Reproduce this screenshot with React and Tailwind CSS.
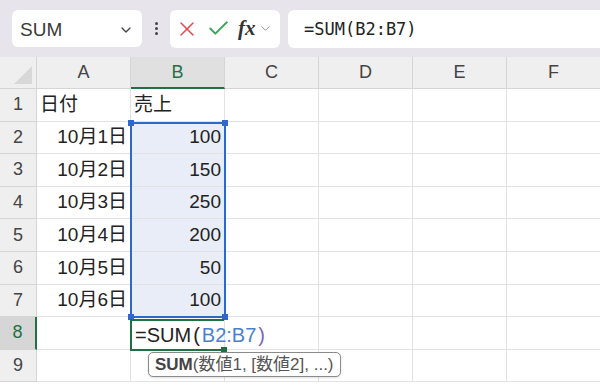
import { ChevronDown, X, Check } from 'lucide-react'

const cols = ['A', 'B', 'C', 'D', 'E', 'F']
const rows = [
  ['日付', '売上'],
  ['10月1日', '100'],
  ['10月2日', '150'],
  ['10月3日', '250'],
  ['10月4日', '200'],
  ['10月5日', '50'],
  ['10月6日', '100'],
  ['', ''],
  ['', ''],
]

const font = { fontFamily: '"Liberation Sans", "Noto Sans CJK JP", sans-serif' }

function Handle({ className }) {
  return <div className={`absolute w-[6px] h-[6px] ${className}`} />
}

function Cell({ r, c, value }) {
  const selected = c === 1 && r >= 1 && r <= 6
  const right = r >= 1 && r <= 6
  return (
    <div
      className={`relative w-[94px] h-full shrink-0 border-r border-b border-[#e2e2e2] px-[3px] flex items-center text-[19px] text-[#222] ${
        right ? 'justify-end' : 'justify-start'
      } ${selected ? 'bg-[#e8edf7]' : 'bg-white'}`}
    >
      {value}
    </div>
  )
}

export default function App() {
  return (
    <div className="w-[600px] h-[386px] overflow-hidden bg-white" style={font}>
      {/* formula bar */}
      <div className="h-[57px] bg-[#e7e5eb] flex items-center pl-3">
        <div className="w-[130px] h-[37px] bg-white rounded-md flex items-center justify-between pl-2 pr-2">
          <span className="text-[19px] text-[#3a3a3a] pt-[3px]">SUM</span>
          <ChevronDown className="w-4 h-4 text-[#444] mt-[2px]" strokeWidth={2} />
        </div>
        <div className="w-[28px] flex flex-col items-center gap-[2px]">
          <span className="w-[3px] h-[3px] rounded-full bg-[#444]" />
          <span className="w-[3px] h-[3px] rounded-full bg-[#444]" />
          <span className="w-[3px] h-[3px] rounded-full bg-[#444]" />
        </div>
        <div className="w-[110px] h-[38px] bg-white rounded-md flex items-center pl-[5px] gap-[7px]">
          <X className="w-[24px] h-[24px] text-[#e5484d]" strokeWidth={1.5} />
          <Check className="w-[25px] h-[25px] text-[#3aa55c]" strokeWidth={1.8} />
          <span className="flex items-center">
            <span
              className="text-[21px] italic font-bold text-[#333] leading-none"
              style={{ fontFamily: '"Liberation Serif", serif' }}
            >
              fx
            </span>
            <ChevronDown className="w-[15px] h-[15px] text-[#999] ml-[2px]" strokeWidth={1.6} />
          </span>
        </div>
        <div className="ml-2 flex-1 h-[38px] bg-white rounded-l-md flex items-center pl-4">
          <span className="text-[17px] text-[#222] pt-[3px]" style={{ fontFamily: '"DejaVu Sans Mono", monospace' }}>
            =SUM(B2:B7)
          </span>
        </div>
      </div>

      {/* column header */}
      <div className="flex h-[32px] bg-[#efefef]">
        <div className="relative w-[37px] shrink-0 border-r border-b border-[#d5d5d5]">
          <div className="absolute right-[4px] bottom-[4px] w-0 h-0 border-l-[18px] border-l-transparent border-b-[18px] border-b-[#d8d8d8]" />
        </div>
        {cols.map((c) => (
          <div
            key={c}
            className={`w-[94px] shrink-0 flex items-center justify-center text-[18px] border-r ${
              c === 'B'
                ? 'bg-[#e0e0e0] text-[#1e7145] border-b-2 border-b-[#1e7145] border-r-[#d5d5d5]'
                : 'text-[#444] border-b border-[#d5d5d5]'
            }`}
          >
            {c}
          </div>
        ))}
      </div>

      {/* rows */}
      <div className="relative">
        {rows.map((row, r) => (
          <div key={r} className="flex h-[32.6px]">
            <div
              className={`w-[37px] shrink-0 flex items-center justify-center text-[18px] border-b border-[#d5d5d5] ${
                r === 7
                  ? 'bg-[#d6d6d6] text-[#1e7145] border-r-2 border-r-[#1e7145]'
                  : 'bg-[#efefef] text-[#444] border-r'
              }`}
            >
              {r + 1}
            </div>
            {cols.map((c, ci) => (
              <Cell key={c} r={r} c={ci} value={row[ci] || ''} />
            ))}
          </div>
        ))}

        {/* B2:B7 range */}
        <div className="absolute left-[130px] top-[32.6px] w-[96px] h-[196px] border-2 border-[#2f68c8] pointer-events-none">
          <Handle className="-left-[4px] -top-[4px] bg-[#2f68c8]" />
          <Handle className="-right-[4px] -top-[4px] bg-[#2f68c8]" />
          <Handle className="-left-[4px] -bottom-[4px] bg-[#2f68c8]" />
          <Handle className="-right-[4px] -bottom-[4px] bg-[#2f68c8]" />
        </div>

        {/* active cell B8 */}
        <div className="absolute left-[130px] top-[230px] w-[94px] h-[32px] border-2 border-r-0 border-[#1e7145] bg-white flex items-center pl-[3px] text-[20px] text-[#222] whitespace-nowrap">
          =SUM<span className="mx-[2px]">(</span>
          <span className="text-[#4a7fd0]">B2:B7</span>
          <span className="text-[#7a64c8] ml-[2px]">)</span>
          <Handle className="-right-[3px] -bottom-[4px] bg-[#1e7145]" />
        </div>

        {/* tooltip */}
        <div className="absolute left-[148px] top-[263px] h-[25px] px-[6px] rounded-[5px] border-[1.5px] border-[#8a8a8a] bg-white flex items-center text-[17px] text-[#555] shadow-sm whitespace-nowrap">
          <span className="font-bold text-[#444]">SUM</span>(数値1, [数値2], ...)
        </div>
      </div>
    </div>
  )
}
